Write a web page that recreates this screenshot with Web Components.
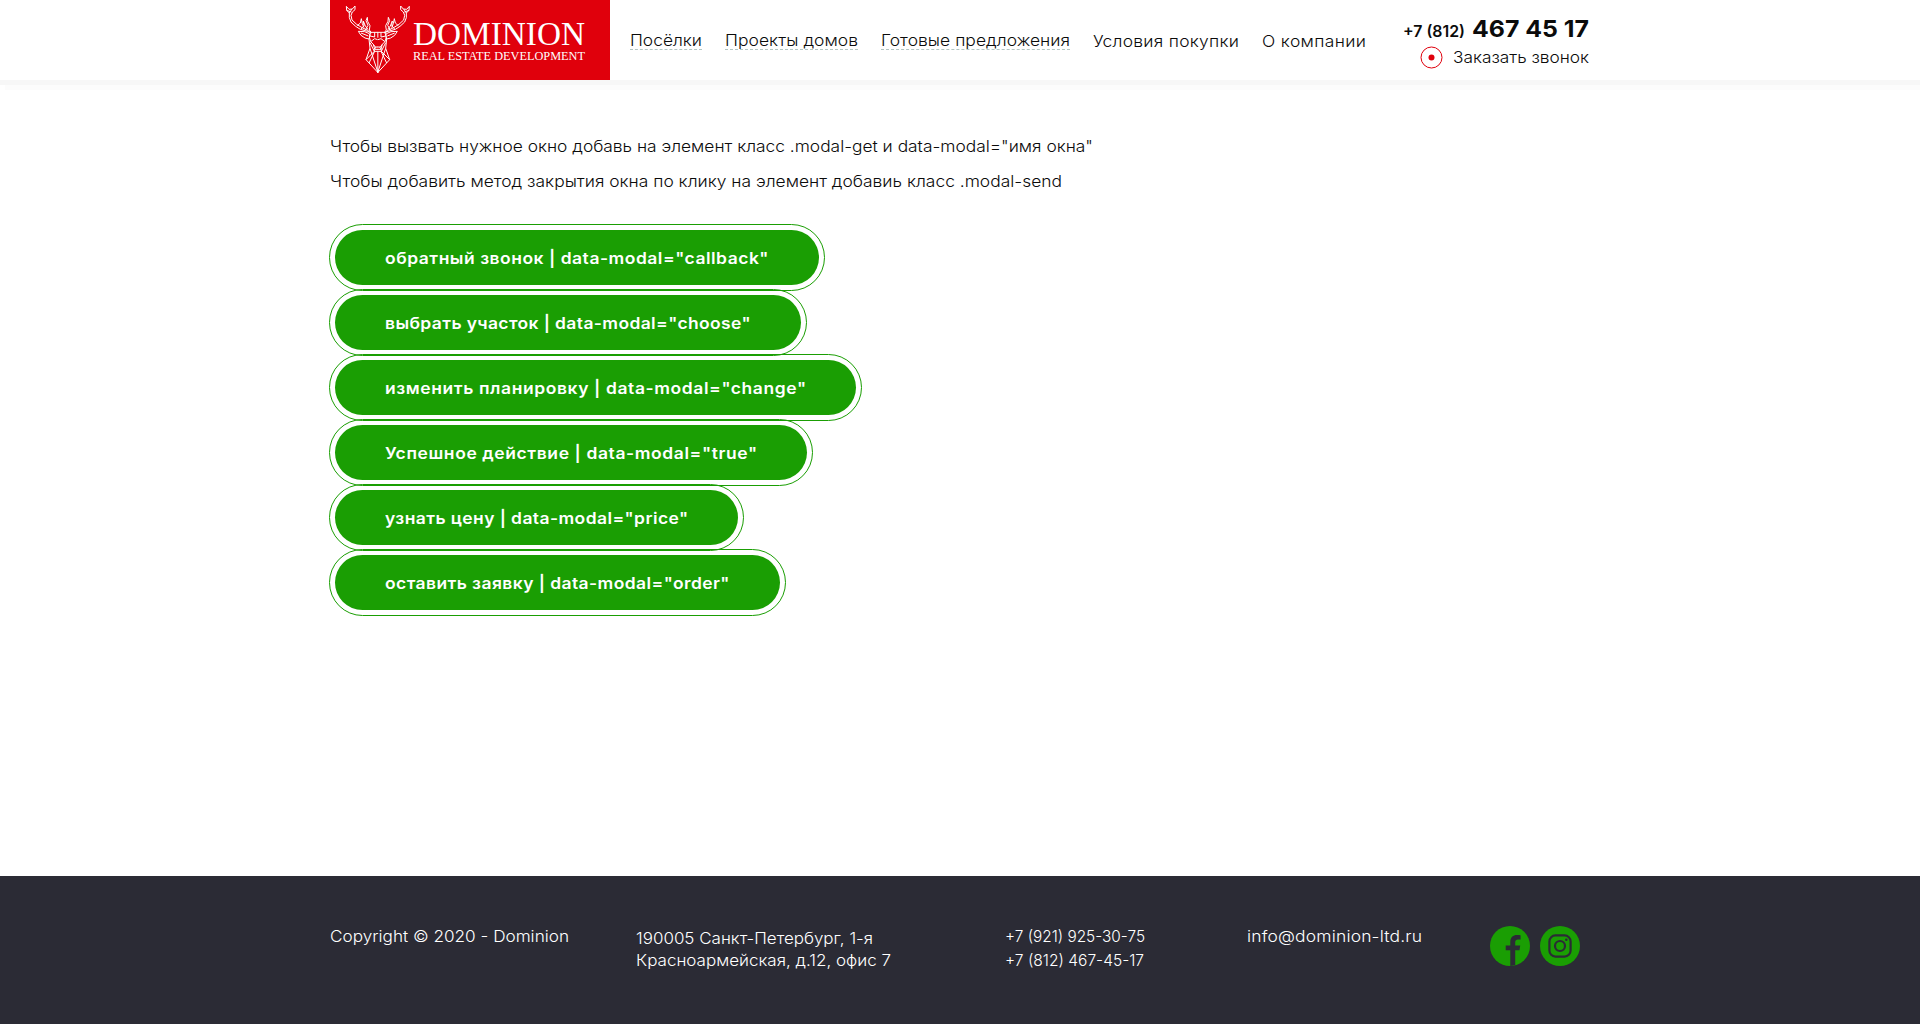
<!DOCTYPE html>
<html lang="ru">
<head>
<meta charset="utf-8">
<title>Dominion</title>
<style>
html,body{margin:0;padding:0;background:#fff}
body{font-family:Inter,"Open Sans",sans-serif;font-size:16px;font-weight:300;color:#0b0b0b}
</style>
</head>
<body>
<dom-page></dom-page>
<script>
function define(name, html, setup){
  const t=document.createElement('template');
  t.innerHTML=html;
  customElements.define(name,class extends HTMLElement{
    constructor(){super();this.attachShadow({mode:'open'}).appendChild(t.content.cloneNode(true));}
    connectedCallback(){if(setup)setup.call(this,this.shadowRoot);}
  });
}

/* A line of text set to the measure in its "w" attribute: the letters are
   widened by at most 9%, and tracking takes up the rest. */
define('fit-text',`<style>
:host{display:block;white-space:nowrap;line-height:inherit}
span{display:inline-block;transform-origin:0 50%}
</style><span><slot></slot></span>`,function(root){
  const s=root.querySelector('span'),w=+this.getAttribute('w'),n=this.textContent.length;
  this.style.width=w+'px';
  s.style.letterSpacing='0px';
  s.style.transform='none';
  const nat=s.getBoundingClientRect().width,k=Math.min(1.09,w/nat);
  s.style.letterSpacing=((w/k-nat)/(n-1)).toFixed(4)+'px';
  s.style.transform='scaleX('+k.toFixed(4)+')';
});

define('dom-logo',`<style>
:host{display:flex;width:280px;height:80px;background:#e0000c;color:#fff;font-family:"Liberation Serif",serif;font-weight:400;flex:none}
svg{width:76px;height:80px;margin-left:10px;flex:none}
.t{margin-left:-3px;padding-top:17px}
.a{font-size:33.5px;line-height:34px}
.b{font-size:12.4px;line-height:14px;margin-top:-2px}
</style>
<svg viewBox="0 0 228 240" fill="none" stroke="#fff" stroke-width="3" stroke-linejoin="round">
<g id="h">
<path d="M19 19l8 9 10-1 8-9 0 11-8 7-4 10 3 14 14 13 18 11 16 7 8 9"/>
<path d="M19 19l1 12 8 8 0 14 5 13 14 13 14 9 22 6 9 3M20 31l14 5M28 39l8-12"/>
<path d="M52 77l9-8 3-13 3 15 5 12M63 87l9-10-2-14 6 15 8 10M76 90l8-14-6-14 4-10 1 12 7 13-2 13 6 8"/>
<path d="M88 101l-14-6-19-1 8 12 12 8 12 3 3-10zM63 99l22 9M92 97h22M92 97l-4 14 4 14 8 8 4 14M104 97v14l-14-3M92 125l12-9 9 3M100 133l6 8h8M104 147l4-6M103 148h11M103 154h11M103 148v8"/>
<path d="M87 117l3 28-12 34 36 39M90 145l24 73M90 128l13 26-25 25M103 156l-16 33"/>
</g><use href="#h" transform="matrix(-1 0 0 1 227 0)"/><path d="M113.500 97v16M113.500 156v62"/>
</svg>
<div class="t"><fit-text class="a" w="172">DOMINION</fit-text><fit-text class="b" w="172">REAL ESTATE DEVELOPMENT</fit-text></div>`);

define('nav-link',`<style>
:host{display:block;line-height:19px;padding-top:1px}
:host([drop]){padding-top:0;height:18px;border-bottom:1px dashed #b3c6c3}
</style><slot></slot>`);

define('site-header',`<style>
:host{display:block;height:80px;background:#fff;box-shadow:0 5px #f7f7f7,5px 10px #fcfcfc}
.in{display:flex;width:1260px;margin:0 auto}
nav{display:flex;align-items:flex-start;padding-top:31px;margin-left:20px;gap:23px;height:49px;line-height:19px}
.c{margin-left:auto;display:flex;flex-direction:column;align-items:flex-end;padding:14px 1px 0 0}
.p{display:flex;align-items:baseline;gap:7px;font-weight:700;line-height:29px}
.n{font-size:23.500px}.s{font-weight:600;font-size:15.500px}
.r{display:flex;align-items:center;gap:10px;line-height:22px;height:22px}
svg{width:23px;height:23px}
</style>
<div class="in"><dom-logo></dom-logo>
<nav><nav-link drop><fit-text w="72">Посёлки</fit-text></nav-link><nav-link drop><fit-text w="133">Проекты домов</fit-text></nav-link><nav-link drop><fit-text w="189">Готовые предложения</fit-text></nav-link><nav-link><fit-text w="146">Условия покупки</fit-text></nav-link><nav-link><fit-text w="104">О компании</fit-text></nav-link></nav>
<div class="c"><div class="p"><fit-text class="s" w="62">+7 (812)</fit-text><fit-text class="n" w="117">467 45 17</fit-text></div>
<div class="r"><svg viewBox="0 0 23 23"><circle cx="11.500" cy="11.500" r="10.500" fill="none" stroke="#e0000c"/><circle cx="11.500" cy="11.500" r="3" fill="#e0000c"/></svg><fit-text w="136">Заказать звонок</fit-text></div></div></div>`);

define('modal-button',`<style>
:host{display:block;position:relative;width:max-content;height:54px;line-height:55px;padding:1px 50px 0;border-radius:27.500px;background:#1a9e03;color:#fff;font-weight:600}
:host::after{content:"";position:absolute;inset:-6px;border:1px solid #1a9e03;border-radius:33.500px}
</style><slot></slot>`);

define('site-main',`<style>
:host{display:block;width:1260px;margin:0 auto;flex:1}
.t{padding-top:54px;line-height:24px;display:grid;gap:11px}
.b{display:grid;gap:10px;margin:37px 0 0 5px}
</style>
<div class="t"><fit-text w="763">Чтобы вызвать нужное окно добавь на элемент класс .modal-get и data-modal="имя окна"</fit-text><fit-text w="732">Чтобы добавить метод закрытия окна по клику на элемент добавиь класс .modal-send</fit-text></div>
<div class="b">
<modal-button><fit-text w="383.500">обратный звонок | data-modal="callback"</fit-text></modal-button>
<modal-button><fit-text w="365.500">выбрать участок | data-modal="choose"</fit-text></modal-button>
<modal-button><fit-text w="421">изменить планировку | data-modal="change"</fit-text></modal-button>
<modal-button><fit-text w="372">Успешное действие | data-modal="true"</fit-text></modal-button>
<modal-button><fit-text w="303">узнать цену | data-modal="price"</fit-text></modal-button>
<modal-button><fit-text w="344.500">оставить заявку | data-modal="order"</fit-text></modal-button>
</div>`);

define('site-footer',`<style>
:host{display:block;height:148px;background:#2b2b35;color:#fff}
.in{width:1260px;margin:0 auto;display:grid;grid-template-columns:306px 369px 242px 243px 100px;align-items:start;padding-top:48px;line-height:24px}
.ad{line-height:22px;padding-top:3px}
.i{display:flex;gap:10px;padding-top:2px}
svg{width:40px;height:40px}
</style>
<div class="in"><fit-text w="239">Copyright © 2020 - Dominion</fit-text>
<div class="ad"><fit-text w="237">190005 Санкт-Петербург, 1-я</fit-text><fit-text w="255">Красноармейская, д.12, офис 7</fit-text></div>
<div><fit-text w="140">+7 (921) 925-30-75</fit-text><fit-text w="139">+7 (812) 467-45-17</fit-text></div>
<fit-text w="175">info@dominion-ltd.ru</fit-text>
<div class="i"><svg viewBox="0 0 40 40"><circle cx="20" cy="20" r="20" fill="#1a9e03"/><path fill="#2b2b35" d="M20.300 40V24.300h-4.600v-4.800h4.600v-3.600c0-4.400 2.600-6.900 6.700-6.900 1.500 0 3 .2 3.600.3v4.100h-2.500c-2.300 0-2.900 1.400-2.900 2.900v3.200h5l-.7 4.800h-4.300v15z"/></svg>
<svg viewBox="0 0 40 40" fill="none" stroke="#2b2b35" stroke-width="2.200"><circle cx="20" cy="20" r="20" fill="#1a9e03" stroke="none"/><rect x="9.400" y="9.400" width="21.200" height="21.200" rx="6"/><circle cx="20" cy="20" r="5"/><circle cx="26.300" cy="13.700" r="1.300" fill="#2b2b35" stroke="none"/></svg></div></div>`);

define('dom-page',`<style>:host{display:flex;flex-direction:column;height:1024px;overflow:hidden}</style>
<site-header></site-header><site-main></site-main><site-footer></site-footer>`);
</script>
</body>
</html>
